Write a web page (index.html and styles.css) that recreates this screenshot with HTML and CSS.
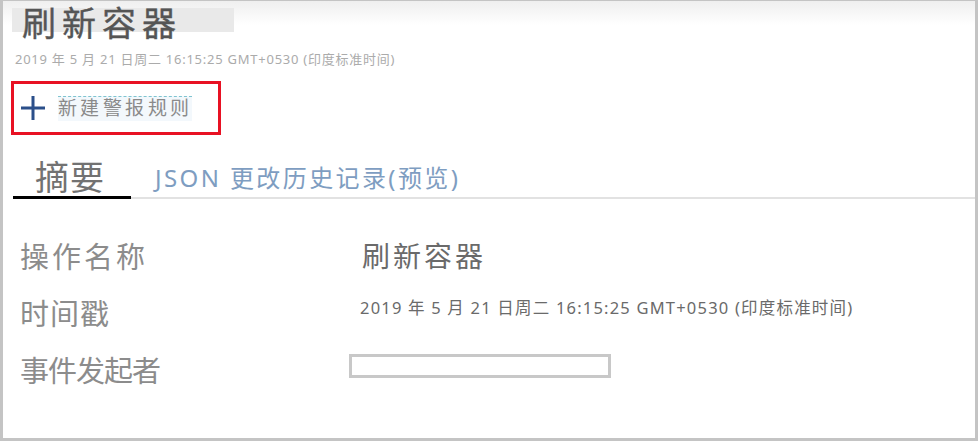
FILE: index.html
```html
<!DOCTYPE html>
<html lang="zh-CN">
<head>
  <meta charset="UTF-8">
  <meta name="viewport" content="width=device-width, initial-scale=1.0">
  <title>刷新容器</title>
  <link rel="stylesheet" href="styles.css">
</head>
<body>
  <div class="frame">
    <header class="head">
      <h1 class="title">刷新容器</h1>
      <div class="stamp">2019 年 5 月 21 日周二 16:15:25 GMT+0530 (印度标准时间)</div>
    </header>

    <div class="actions">
      <button class="new-rule">
        <svg class="plus" width="26" height="26" viewBox="0 0 26 26" aria-hidden="true">
          <path d="M13 1v24M1 13h24" stroke="#2b4f8a" stroke-width="3" fill="none"/>
        </svg>
        <span class="new-rule-text">新建警报规则</span>
      </button>
    </div>

    <nav class="tabs">
      <div class="tab active">摘要</div>
      <div class="tab">JSON 更改历史记录(预览)</div>
    </nav>

    <div class="details">
      <div class="label wide">操作名称</div>
      <div class="value big">刷新容器</div>

      <div class="label">时间戳</div>
      <div class="value small">2019 年 5 月 21 日周二 16:15:25 GMT+0530 (印度标准时间)</div>

      <div class="label tight">事件发起者</div>
      <div class="value"><div class="blank"></div></div>
    </div>
  </div>
</body>
</html>
```

FILE: styles.css
```css
/* Reset y tipografía */
* { box-sizing: border-box; margin: 0; padding: 0; }
body { font-family: "Noto Sans", "Noto Sans CJK SC", sans-serif; background: #fff; }

/* Marco exterior */
.frame {
  width: 978px; height: 441px;
  border: 3px solid #c4c4c4; border-top-width: 1px;
  background: linear-gradient(#efefef, #fff 24px);
  overflow: hidden;
}

/* Cabecera */
.head { padding: 7px 0 0 9px; height: 80px; }
.title {
  display: inline-block; background: #e9e9e9;
  font-size: 34px; font-weight: 400; line-height: 30px; letter-spacing: 6px;
  color: #555; padding: 0 52px 0 10px; height: 24px; overflow: visible;
  -webkit-text-stroke: 0.4px #555;
}
.stamp { font-size: 13px; color: #ababab; margin-top: 8px; padding-left: 3px; letter-spacing: 0.75px; }

/* Botón nueva regla */
.actions { padding-left: 8px; height: 72px; }
.new-rule {
  display: flex; align-items: center; gap: 12px;
  width: 210px; height: 54px; padding-left: 6px;
  border: 3px solid #e81123; background: #fff; cursor: pointer;
}
.new-rule-text {
  font-family: inherit; font-size: 19px; letter-spacing: 3.4px; color: #8a8a8a;
  background: #f3f8fc; border-top: 1px dashed #7fc4d0; line-height: 24px;
}

/* Pestañas */
.tabs { display: flex; align-items: flex-end; margin-left: 10px; border-bottom: 2px solid #e2e2e2; height: 46px; }
.tab { font-size: 24px; color: #7e9dc1; line-height: 34px; padding: 0 0 2px 24px; letter-spacing: 2.4px; }
.tab.active {
  font-size: 34px; color: #727272; line-height: 38px; letter-spacing: 1px;
  width: 118px; padding: 0 0 0 22px; border-bottom: 3px solid #000; margin-bottom: -2px;
}

/* Detalles */
.details {
  display: grid; grid-template-columns: 329px 1fr; grid-auto-rows: 57px;
  align-items: center; padding: 27px 0 0 17px;
}
.label { font-size: 29px; color: #8c8c8c; letter-spacing: 1px; }
.label.wide { letter-spacing: 3px; }
.label.tight { letter-spacing: -1px; }
.value { color: #6a6a6a; }
.value.big { font-size: 28px; padding-left: 13px; letter-spacing: 3px; }
.value.small { font-size: 16.5px; padding-left: 11px; margin-top: -10px; color: #6a6a6a; letter-spacing: 1.2px; }
.blank { width: 262px; height: 24px; border: 3px solid #c8c8c8; margin-top: -6px; }
```
